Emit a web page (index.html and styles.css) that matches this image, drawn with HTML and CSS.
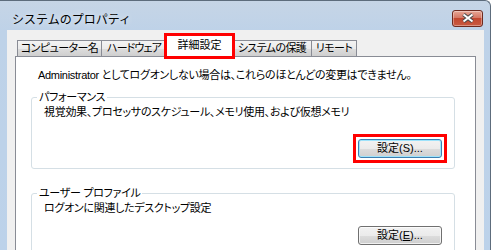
FILE: index.html
```html
<!DOCTYPE html>
<html lang="ja">
<head>
    <meta charset="UTF-8">
    <title>システムのプロパティ</title>
    <link rel="stylesheet" href="styles.css">
</head>
<body>
    <div class="window">
        <div class="titlebar">
            <span class="title">システムのプロパティ</span>
            <button class="close" title="閉じる">
                <svg width="14" height="10" viewBox="0 0 14 10">
                    <path d="M2.5 1.5 L11.5 8.5 M11.5 1.5 L2.5 8.5" stroke="#4b4b4b" stroke-width="4"/>
                    <path d="M2.5 1.5 L11.5 8.5 M11.5 1.5 L2.5 8.5" stroke="#fff" stroke-width="2"/>
                </svg>
            </button>
        </div>
        <div class="client">
            <div class="tabs">
                <div class="tab tab-name">コンピューター名</div>
                <div class="tab tab-hw">ハードウェア</div>
                <div class="tab tab-adv active marked">詳細設定</div>
                <div class="tab tab-prot">システムの保護</div>
                <div class="tab tab-remote">リモート</div>
            </div>
            <div class="panel">
                <p class="intro">Administrator としてログオンしない場合は、これらのほとんどの変更はできません。</p>
                <fieldset class="group">
                    <legend>パフォーマンス</legend>
                    <p>視覚効果、プロセッサのスケジュール、メモリ使用、および仮想メモリ</p>
                    <div class="actions">
                        <button class="btn default marked">設定(S)...</button>
                    </div>
                </fieldset>
                <fieldset class="group second">
                    <legend>ユーザー プロファイル</legend>
                    <p>ログオンに関連したデスクトップ設定</p>
                    <div class="actions">
                        <button class="btn">設定(<u>E</u>)...</button>
                    </div>
                </fieldset>
            </div>
        </div>
    </div>
</body>
</html>
```

FILE: styles.css
```css
body {
    margin: 0;
    width: 493px;
    height: 250px;
    overflow: hidden;
    background: #fff;
    color: #000;
    font-family: "Liberation Sans", "Noto Sans CJK JP", sans-serif;
    font-size: 11px;
    line-height: 15px;
    letter-spacing: -0.3px;
    font-feature-settings: "palt";
}
.window {
    width: 491px;
    height: 262px;
    box-sizing: border-box;
    border-top: 1px solid #5d6c7c;
    border-right: 1px solid #5d6c7c;
    border-top-right-radius: 6px;
    background: linear-gradient(#c6d5e6, #bed2e8 30px, #bcd2ea);
    display: flex;
    flex-direction: column;
}
.titlebar {
    flex: none;
    height: 24px;
    padding: 5px 7px 0 12px;
    display: flex;
    align-items: center;
    justify-content: space-between;
}
.title {
    font-family: "Noto Sans CJK JP", sans-serif;
    font-size: 12px;
    letter-spacing: 0;
    font-feature-settings: normal;
    text-shadow: 0 0 6px rgba(255,255,255,0.9);
}
.close {
    width: 31px;
    height: 17px;
    padding: 0;
    border: 1px solid #6e2a1f;
    border-radius: 3px;
    background: linear-gradient(#e7a796, #d57764 45%, #c2472f 50%, #c95a41);
    box-shadow: inset 0 0 0 1px rgba(255,255,255,0.35);
    display: flex;
    align-items: center;
    justify-content: center;
}
.client {
    flex: 1;
    margin: 0 6px 0 7px;
    padding: 5px 8px 0;
    background: #f0f0f0;
    display: flex;
    flex-direction: column;
}
.tabs {
    flex: none;
    display: flex;
    align-items: flex-end;
    padding-left: 2px;
}
.tab {
    box-sizing: border-box;
    height: 16px;
    border: 1px solid #898c95;
    border-bottom: none;
    margin-right: -1px;
    letter-spacing: -0.6px;
    text-align: center;
    background: linear-gradient(#f3f3f3, #ebebeb 50%, #dddddd 50%, #cfcfcf);
    white-space: nowrap;
    overflow: hidden;
}
.tab-name { width: 85px; }
.tab-hw { width: 66px; letter-spacing: -0.9px; }
.tab-adv { width: 67px; }
.tab-prot { width: 80px; }
.tab-remote { width: 46px; }
.tab.active {
    height: 22px;
    line-height: 19px;
    margin-bottom: -1px;
    letter-spacing: 0;
    background: #fff;
    overflow: visible;
    position: relative;
    z-index: 1;
}
.tab.marked {
    outline: 3px solid #f00;
    outline-offset: -1px;
}
.panel {
    flex: 1;
    background: #fff;
    border: 1px solid #898c95;
    padding: 11px 20px 0 15px;
}
.intro {
    margin: 0 0 7px 7px;
    white-space: nowrap;
}
.group {
    margin: 0;
    padding: 0 12px 10px;
    border: 1px solid #d5dfe5;
    border-radius: 3px;
}
.group legend {
    padding: 0 2px;
    margin-left: -7px;
}
.group p {
    margin: 0;
}
.group.second {
    margin-top: 17px;
}
.actions {
    display: flex;
    justify-content: flex-end;
    margin-top: 19px;
}
.second .actions {
    margin-top: 10px;
}
.btn {
    width: 84px;
    height: 19px;
    padding: 0;
    font: inherit;
    letter-spacing: 0;
    border: 1px solid #707070;
    border-radius: 3px;
    background: linear-gradient(#f2f2f2, #ebebeb 50%, #dddddd 50%, #cfcfcf);
    box-shadow: inset 0 0 0 1px rgba(255,255,255,0.7);
}
.btn.default {
    border-color: #3c7fb1;
    box-shadow: inset 0 0 0 1px #9ee3fb;
}
/* red highlight box drawn over the button */
.btn.marked {
    position: relative;
}
.btn.marked::after {
    content: "";
    position: absolute;
    inset: -6px;
    border: 3px solid #f00;
}
```
